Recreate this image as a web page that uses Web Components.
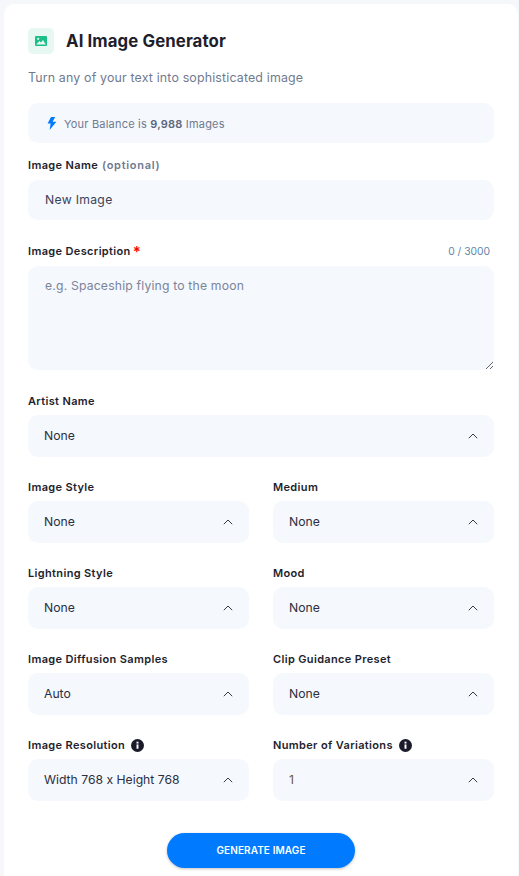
<!DOCTYPE html>
<html lang="en"><head><meta charset="utf-8"><title>AI Image Generator</title>
<style>
html,body{margin:0;height:876px;overflow:hidden;background:#f5f7fb;font-family:Inter,"Liberation Sans",sans-serif;color:#1e1e2d}
</style></head><body>
<gen-card>
  <gen-header slot="header" title="AI Image Generator" sub="Turn any of your text into sophisticated image"></gen-header>
  <gen-balance></gen-balance>
  <gen-field label="Image Name" note="(optional)" gap="13" lm="6"><gen-input value="New Image"></gen-input></gen-field>
  <gen-field label="Image Description" required counter="0 / 3000" gap="22" lm="6"><gen-textarea placeholder="e.g. Spaceship flying to the moon"></gen-textarea></gen-field>
  <gen-field label="Artist Name" gap="22"><gen-select value="None"></gen-select></gen-field>
  <gen-row>
    <gen-field label="Image Style"><gen-select value="None"></gen-select></gen-field>
    <gen-field label="Medium"><gen-select value="None"></gen-select></gen-field>
  </gen-row>
  <gen-row>
    <gen-field label="Lightning Style"><gen-select value="None"></gen-select></gen-field>
    <gen-field label="Mood"><gen-select value="None"></gen-select></gen-field>
  </gen-row>
  <gen-row>
    <gen-field label="Image Diffusion Samples"><gen-select value="Auto"></gen-select></gen-field>
    <gen-field label="Clip Guidance Preset"><gen-select value="None"></gen-select></gen-field>
  </gen-row>
  <gen-row>
    <gen-field label="Image Resolution" info><gen-select value="Width 768 x Height 768"></gen-select></gen-field>
    <gen-field label="Number of Variations" info><gen-select value="1" tone="#6b5a30"></gen-select></gen-field>
  </gen-row>
  <gen-button>GENERATE IMAGE</gen-button>
</gen-card>
<script>
const el=(name,html)=>customElements.define(name,class extends HTMLElement{
  connectedCallback(){ if(this.shadowRoot) return; this.attachShadow({mode:'open'}).innerHTML=typeof html==='function'?html(this):html; }
});
const esc=s=>(s||'').replace(/&/g,'&amp;').replace(/</g,'&lt;');
el('gen-card',`<style>:host{display:block;box-sizing:border-box;margin:4px 1px 0 4px;height:880px;background:#fff;border-radius:10px;padding:24px 24px 0}</style><slot name="header"></slot><slot></slot>`);
el('gen-header',h=>`<style>:host{display:block}
.t{display:flex;align-items:center;gap:12px;height:26px}
.i{width:26px;height:26px;border-radius:5px;background:#e6f8f1;display:flex;align-items:center;justify-content:center}
h1{margin:0;font:700 16.8px/26px Inter,"Liberation Sans",sans-serif;letter-spacing:.1px;color:#1e1e2d}
p{margin:14px 0 0;font:400 12.4px/20px Inter,"Liberation Sans",sans-serif;letter-spacing:.16px;color:#6f7a90}</style>
<div class="t"><div class="i"><svg width="12" height="10" viewBox="0 0 12 10"><rect width="12" height="10" rx="1" fill="#1cbf87"/><circle cx="3.2" cy="2.8" r="1.1" fill="#e6f8f1"/><path d="M1.2 8.4 4.4 5l1.5 1.5L8 4l2.8 4.4z" fill="#e6f8f1"/></svg></div><h1>${esc(h.getAttribute('title'))}</h1></div><p>${esc(h.getAttribute('sub'))}</p>`);
el('gen-balance',`<style>:host{display:flex;align-items:center;box-sizing:border-box;height:40px;margin-top:15px;padding:2px 0 0 19px;background:#f5f8fc;border-radius:10px;font:400 11px/16px Inter,"Liberation Sans",sans-serif;letter-spacing:.2px;color:#6f7a90}
svg{margin:-2px 7px 0 0}b{font-weight:600;color:#5b667c}</style>
<svg width="10" height="13" viewBox="0 0 10 13"><path d="M4 0 .6 6.6h3L2.6 13 9.4 4.8H5.6L8.2 0z" fill="#007bff"/></svg><span>Your Balance is&nbsp;<b>9,988</b> Images</span>`);
el('gen-field',h=>`<style>:host{display:block;min-width:0;margin-top:${h.getAttribute('gap')||0}px}
.l{display:flex;align-items:center;height:18px;margin-bottom:${h.getAttribute('lm')||5}px;font:600 11px/18px Inter,"Liberation Sans",sans-serif;letter-spacing:.35px;color:#1e1e2d;white-space:nowrap}
.n{color:#6f7a90;margin-left:4px;letter-spacing:.7px}.r{color:#f00;margin-left:2px;font-size:15px;line-height:18px;padding-top:2px}
.c{margin-left:auto;margin-right:4px;font:400 10.3px/18px Inter,"Liberation Sans",sans-serif;letter-spacing:0;color:#5f86a8}
svg{margin-left:6px}</style>
<div class="l">${esc(h.getAttribute('label'))}${h.getAttribute('note')?`<span class="n">${esc(h.getAttribute('note'))}</span>`:''}${h.hasAttribute('required')?'<span class="r">*</span>':''}${h.hasAttribute('info')?'<svg width="13" height="13" viewBox="0 0 12 12"><circle cx="6" cy="6" r="6" fill="#1a1a2b"/><rect x="5.1" y="5" width="1.8" height="4" fill="#fff"/><rect x="5.1" y="2.5" width="1.8" height="1.7" fill="#fff"/></svg>':''}${h.getAttribute('counter')?`<span class="c">${esc(h.getAttribute('counter'))}</span>`:''}</div><slot></slot>`);
el('gen-input',h=>`<style>:host{display:block}input{display:block;box-sizing:border-box;width:100%;height:40px;border:0;outline:0;border-radius:10px;background:#f5f8fc;padding:0 17px 2px;font:400 12.2px Inter,"Liberation Sans",sans-serif;letter-spacing:.3px;color:#3c4257}</style><input value="${esc(h.getAttribute('value'))}">`);
el('gen-textarea',h=>`<style>:host{display:block}textarea{display:block;box-sizing:border-box;width:100%;height:104px;border:0;outline:0;border-radius:10px;background:#f5f8fc;padding:12px 17px;font:400 12.2px/16px Inter,"Liberation Sans",sans-serif;letter-spacing:.18px;color:#3c4257;resize:vertical}textarea::placeholder{color:#7b8499;opacity:1}</style><textarea placeholder="${esc(h.getAttribute('placeholder'))}"></textarea>`);
el('gen-select',h=>`<style>:host{display:flex;align-items:center;justify-content:space-between;box-sizing:border-box;height:42px;padding:0 16px;background:#f5f8fc;border-radius:10px;font:400 12.2px/16px Inter,"Liberation Sans",sans-serif;color:${h.getAttribute('tone')||'#2a2f42'}}svg{flex:none}</style><span>${esc(h.getAttribute('value'))}</span><svg width="10" height="6" viewBox="0 0 10 6"><path d="M.8 5.2 5 1l4.2 4.2" fill="none" stroke="#333a48" stroke-width="1"/></svg>`);
el('gen-row',`<style>:host{display:grid;grid-template-columns:221px 221px;gap:24px;margin-top:21px}</style><slot></slot>`);
el('gen-button',`<style>:host{display:block;text-align:center;margin-top:32px}button{width:188px;height:35px;border:0;border-radius:18px;background:#007bff;color:#fff;font:600 10px/35px Inter,"Liberation Sans",sans-serif;letter-spacing:.1px;box-shadow:0 1px 3px rgba(0,0,0,.25);padding:0}</style><button><slot></slot></button>`);
</script>
</body></html>
